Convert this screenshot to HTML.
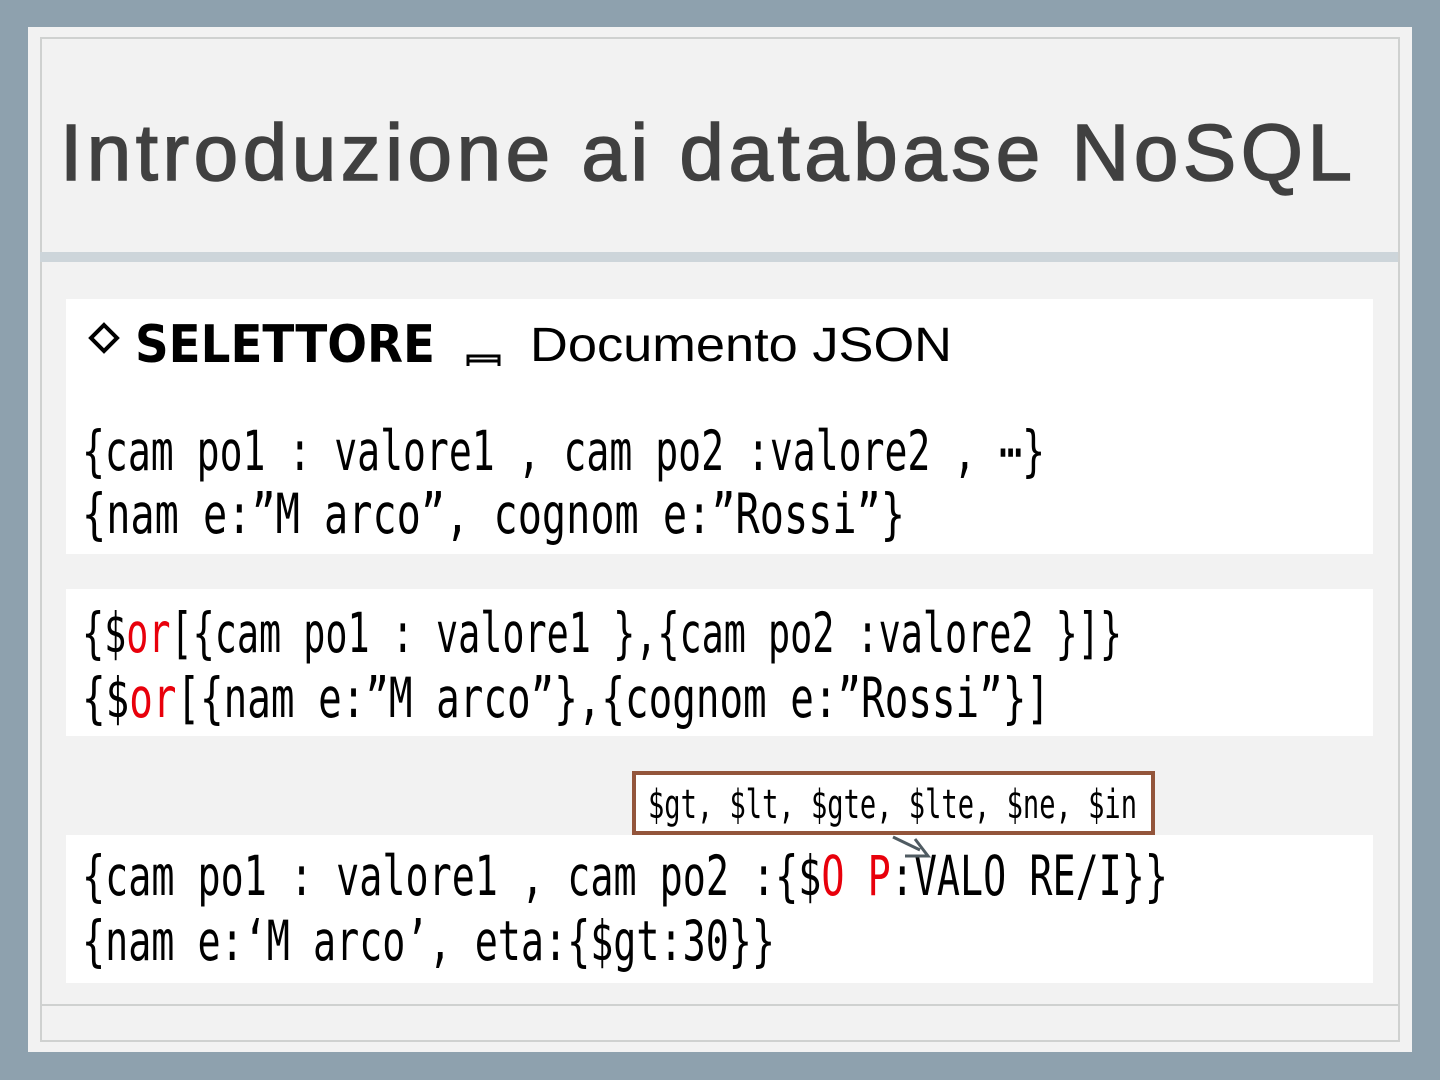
<!DOCTYPE html>
<html><head><meta charset="utf-8"><style>
html,body{margin:0;padding:0}
body{width:1440px;height:1080px;background:#8ea1ae;position:relative;overflow:hidden;font-family:"Liberation Sans",sans-serif}
.slide{position:absolute;left:28px;top:27px;width:1384px;height:1025px;background:#f2f2f2}
.frame{position:absolute;left:40px;top:37px;width:1356px;height:1001px;border:2px solid #cfd1d0}
.band{position:absolute;left:40px;top:252px;width:1358px;height:10px;background:#cdd5da}
.bline{position:absolute;left:40px;top:1004px;width:1358px;height:2px;background:#cfd1d0}
.box{position:absolute;left:66px;width:1307px;background:#fff}
</style></head><body>
<div class="slide"></div>
<div class="frame"></div>
<div class="band"></div>
<div class="bline"></div>
<div class="box" style="top:299px;height:255px"></div>
<div class="box" style="top:589px;height:147px"></div>
<div class="box" style="top:835px;height:148px"></div>
<svg width="1440" height="1080" style="position:absolute;left:0;top:0">
<text x="60" y="180" font-family="Liberation Sans, sans-serif" font-size="80" fill="#404040" stroke="#404040" stroke-width="1.5" textLength="1292" lengthAdjust="spacing">Introduzione ai database NoSQL</text>
<polygon points="104,325 117,338 104,351 91,338" fill="none" stroke="#000" stroke-width="4"/>
<text x="135" y="362" font-family="DejaVu Sans, sans-serif" font-weight="bold" font-size="52" textLength="300" lengthAdjust="spacingAndGlyphs">SELETTORE</text>
<path d="M468 366 V356 H499 V366 M468 361 H499" fill="none" stroke="#000" stroke-width="3"/>
<text x="530" y="361" font-family="Liberation Sans, sans-serif" font-size="48" textLength="422" lengthAdjust="spacingAndGlyphs">Documento JSON</text>
<g font-family="DejaVu Sans Mono, monospace" font-size="55" fill="#000">
<text x="82" y="470" textLength="963" lengthAdjust="spacingAndGlyphs">{cam po1 : valore1 , cam po2 :valore2 , ⋯}</text>
<text x="82" y="533" textLength="823" lengthAdjust="spacingAndGlyphs">{nam e:”M arco”, cognom e:”Rossi”}</text>
<text x="82" y="652" textLength="1040" lengthAdjust="spacingAndGlyphs">{$<tspan fill="#e8000b">or</tspan>[{cam po1 : valore1 },{cam po2 :valore2 }]}</text>
<text x="82" y="717" textLength="968" lengthAdjust="spacingAndGlyphs">{$<tspan fill="#e8000b">or</tspan>[{nam e:”M arco”},{cognom e:”Rossi”}]</text>
<text x="82" y="895" textLength="1086" lengthAdjust="spacingAndGlyphs">{cam po1 : valore1 , cam po2 :{$<tspan fill="#e8000b">O P</tspan>:VALO RE/I}}</text>
<text x="82" y="960" textLength="693" lengthAdjust="spacingAndGlyphs">{nam e:‘M arco’, eta:{$gt:30}}</text>
</g>
<rect x="634" y="773" width="519" height="60" fill="#fff" stroke="#93553b" stroke-width="4"/>
<text x="648" y="818" font-family="DejaVu Sans Mono, monospace" font-size="40" textLength="489" lengthAdjust="spacingAndGlyphs">$gt, $lt, $gte, $lte, $ne, $in</text>
<path d="M893 837 L920 850 M915 839 L928 856 L905 856" fill="none" stroke="#4f5b62" stroke-width="3"/>
</svg>
</body></html>
